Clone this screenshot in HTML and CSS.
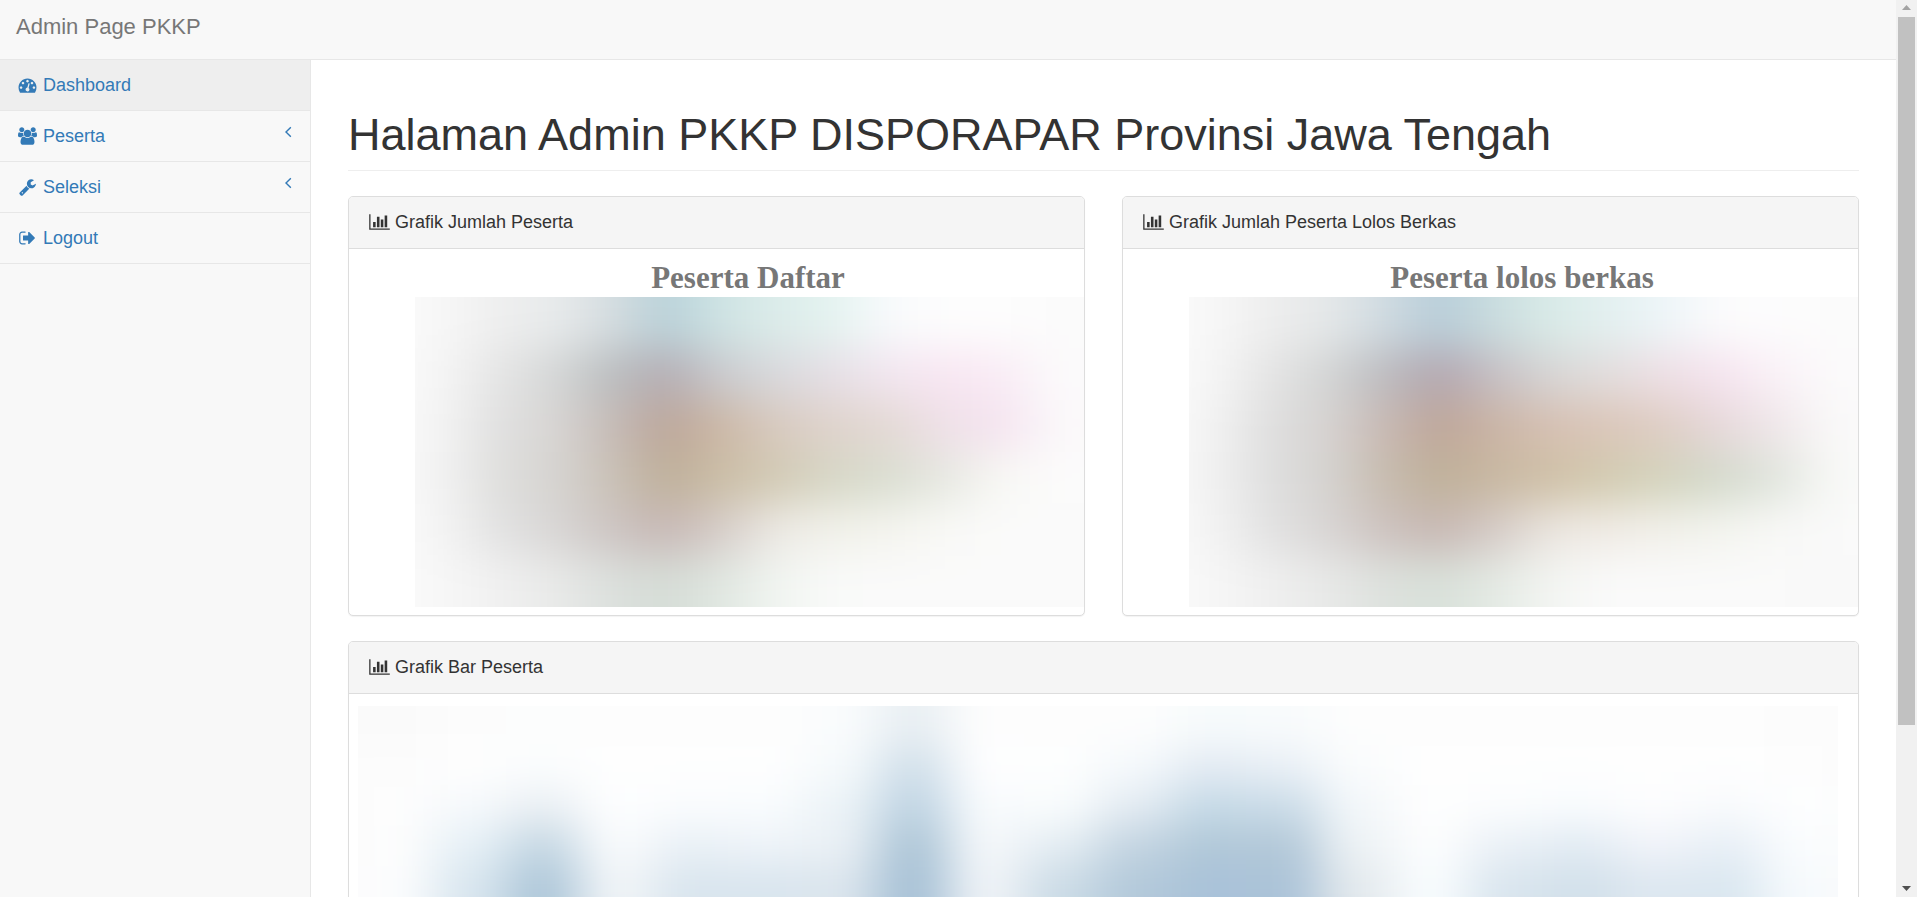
FILE: index.html
```html
<!DOCTYPE html>
<html lang="id">
<head>
<meta charset="utf-8">
<title>Admin Page PKKP</title>
<link rel="stylesheet" href="styles.css">
</head>
<body>
<div class="window">
  <div class="page">
    <header class="topbar"><a class="brand" href="#">Admin Page PKKP</a></header>
    <div class="columns">
      <nav class="sidebar" aria-label="Menu">
        <ul class="menu">
          <li><a class="menu-link active" href="#">
            <svg class="icon" viewBox="0 0 1792 1792" aria-hidden="true"><path d="M384 1152q0-53-37.5-90.5t-90.5-37.5-90.5 37.5-37.5 90.5 37.5 90.5 90.5 37.5 90.5-37.5 37.5-90.5zm192-448q0-53-37.5-90.5t-90.5-37.5-90.5 37.5-37.5 90.5 37.5 90.5 90.5 37.5 90.5-37.5 37.5-90.5zm428 481l101-382q6-26-7.5-48.5t-38.5-29.5-48 6.5-30 39.5l-101 382q-60 5-107 43.5t-63 98.5q-20 77 20 146t117 89 146-20 89-117q16-60-6-117t-72-91zm660-33q0-53-37.5-90.5t-90.5-37.5-90.5 37.5-37.5 90.5 37.5 90.5 90.5 37.5 90.5-37.5 37.5-90.5zm-640-640q0-53-37.5-90.5t-90.5-37.5-90.5 37.5-37.5 90.5 37.5 90.5 90.5 37.5 90.5-37.5 37.5-90.5zm448 192q0-53-37.5-90.5t-90.5-37.5-90.5 37.5-37.5 90.5 37.5 90.5 90.5 37.5 90.5-37.5 37.5-90.5zm320 448q0 261-141 483-19 29-54 29h-1402q-35 0-54-29-141-221-141-483 0-182 71-348t191-286 286-191 348-71 348 71 286 191 191 286 71 348z"/></svg>
            <span>Dashboard</span></a></li>
          <li><a class="menu-link" href="#">
            <svg class="icon" viewBox="0 0 1920 1792" aria-hidden="true"><path d="M593 896q-162 5-265 128h-134q-82 0-138-40.500t-56-118.500q0-353 124-353 6 0 43.500 21t97.500 42.500 119 21.500q67 0 133-23-5 37-5 66 0 139 81 256zm1071 637q0 120-73 189.500t-194 69.500h-874q-121 0-194-69.500t-73-189.500q0-53 3.500-103.500t14-109 26.500-108.500 43-97.500 62-81 85.500-53.500 111.500-20q10 0 43 21.500t73 48 107 48 135 21.500 135-21.500 107-48 73-48 43-21.500q61 0 111.500 20t85.500 53.500 62 81 43 97.500 26.500 108.500 14 109 3.500 103.500zm-1024-1277q0 106-75 181t-181 75-181-75-75-181 75-181 181-75 181 75 75 181zm704 384q0 159-112.500 271.500t-271.500 112.500-271.500-112.500-112.500-271.500 112.500-271.500 271.500-112.500 271.500 112.500 112.500 271.500zm576 225q0 78-56 118.500t-138 40.500h-134q-103-123-265-128 81-117 81-256 0-29-5-66 66 23 133 23 59 0 119-21.500t97.500-42.500 43.500-21q124 0 124 353zm-128-609q0 106-75 181t-181 75-181-75-75-181 75-181 181-75 181 75 75 181z"/></svg>
            <span>Peserta</span>
            <svg class="arrow" viewBox="512 416 768 1088" aria-hidden="true"><path d="M1203 544q0 13-10 23l-393 393 393 393q10 10 10 23t-10 23l-50 50q-10 10-23 10t-23-10l-466-466q-10-10-10-23t10-23l466-466q10-10 23-10t23 10l50 50q10 10 10 23z"/></svg></a></li>
          <li><a class="menu-link" href="#">
            <svg class="icon" viewBox="0 0 1792 1792" aria-hidden="true"><path d="M448 1472q0-26-19-45t-45-19-45 19-19 45 19 45 45 19 45-19 19-45zm644-420l-682 682q-37 37-90 37-52 0-91-37l-106-108q-38-36-38-90 0-53 38-91l681-681q39 98 114.500 173.500t173.500 114.500zm634-435q0 39-23 106-47 134-164.500 217.500t-258.500 83.500q-185 0-316.500-131.500t-131.500-316.500 131.500-316.500 316.500-131.500q58 0 121.500 16.500t107.500 46.500q16 11 16 28t-16 28l-293 169v224l193 107q5-3 79-48.500t135.500-81 70.500-35.500q15 0 23.500 10t8.500 25z"/></svg>
            <span>Seleksi</span>
            <svg class="arrow" viewBox="512 416 768 1088" aria-hidden="true"><path d="M1203 544q0 13-10 23l-393 393 393 393q10 10 10 23t-10 23l-50 50q-10 10-23 10t-23-10l-466-466q-10-10-10-23t10-23l466-466q10-10 23-10t23 10l50 50q10 10 10 23z"/></svg></a></li>
          <li><a class="menu-link" href="#">
            <svg class="icon" viewBox="0 0 1792 1792" aria-hidden="true"><path d="M704 1440q0 4 1 20t.5 26.500-3 23.500-10 19.500-20.500 6.500h-320q-119 0-203.500-84.500t-84.500-203.500v-704q0-119 84.500-203.500t203.500-84.500h320q13 0 22.500 9.500t9.500 22.500q0 4 1 20t.5 26.500-3 23.500-10 19.500-20.500 6.500h-320q-66 0-113 47t-47 113v704q0 66 47 113t113 47h312l11.500 1 11.500 3 8 5.500 7 9 2 13.500zm928-544q0 26-19 45l-544 544q-19 19-45 19t-45-19-19-45v-288h-448q-26 0-45-19t-19-45v-384q0-26 19-45t45-19h448v-288q0-26 19-45t45-19 45 19l544 544q19 19 19 45z"/></svg>
            <span>Logout</span></a></li>
        </ul>
      </nav>
      <main class="content">
        <h1 class="page-header">Halaman Admin PKKP DISPORAPAR Provinsi Jawa Tengah</h1>
        <div class="panels">
          <section class="panel">
            <h2 class="panel-heading"><svg class="chart-icon" viewBox="0 0 2048 1792" aria-hidden="true"><path d="M640 896v512h-256v-512h256zm384-512v1024h-256v-1024h256zm1024 1152v128h-2048v-1536h128v1408h1920zm-640-896v768h-256v-768h256zm384-384v1152h-256v-1152h256z"/></svg>Grafik Jumlah Peserta</h2>
            <div class="panel-body map">
              <h3 class="chart-title">Peserta Daftar</h3>
              <svg class="chart" id="daftar" role="img" aria-label="Peserta Daftar"></svg>
            </div>
          </section>
          <section class="panel">
            <h2 class="panel-heading"><svg class="chart-icon" viewBox="0 0 2048 1792" aria-hidden="true"><path d="M640 896v512h-256v-512h256zm384-512v1024h-256v-1024h256zm1024 1152v128h-2048v-1536h128v1408h1920zm-640-896v768h-256v-768h256zm384-384v1152h-256v-1152h256z"/></svg>Grafik Jumlah Peserta Lolos Berkas</h2>
            <div class="panel-body map">
              <h3 class="chart-title">Peserta lolos berkas</h3>
              <svg class="chart" id="lolos" role="img" aria-label="Peserta lolos berkas"></svg>
            </div>
          </section>
          <section class="panel wide">
            <h2 class="panel-heading"><svg class="chart-icon" viewBox="0 0 2048 1792" aria-hidden="true"><path d="M640 896v512h-256v-512h256zm384-512v1024h-256v-1024h256zm1024 1152v128h-2048v-1536h128v1408h1920zm-640-896v768h-256v-768h256zm384-384v1152h-256v-1152h256z"/></svg>Grafik Bar Peserta</h2>
            <div class="panel-body bars">
              <svg class="chart tall" id="bar" role="img" aria-label="Grafik Bar Peserta"></svg>
            </div>
          </section>
        </div>
      </main>
    </div>
  </div>
  <div class="scrollbar" aria-hidden="true">
    <svg class="scroll-arrow" viewBox="0 0 21 17"><path class="dim" d="M6 10h9l-4.500-5z"/></svg>
    <div class="track"><div class="thumb"></div></div>
    <svg class="scroll-arrow" viewBox="0 0 21 17"><path d="M6 6h9l-4.500 5z"/></svg>
  </div>
</div>
<script src="charts.js"></script>
</body>
</html>
```
FILE: styles.css
```css
* { box-sizing: border-box; }
body {
  margin: 0;
  font-family: "Liberation Sans", Arial, sans-serif;
  font-size: 18px;
  line-height: 25px;
  color: #333;
  background: #fff;
}
a { color: #337ab7; text-decoration: none; }
h1, h2, h3, ul { margin: 0; padding: 0; font-weight: normal; }

.window { display: flex; height: 100vh; }
.page {
  flex: 1;
  min-width: 0;
  display: flex;
  flex-direction: column;
  overflow: hidden;
  background: #f8f8f8;
}
.topbar {
  flex: none;
  padding: 14px 16px 20px;
  border-bottom: 1px solid #e7e7e7;
}
.brand { display: block; font-size: 22px; color: #777; }

.columns { flex: 1; display: flex; min-height: 0; }
.sidebar { flex: none; width: 310px; }
.menu { list-style: none; }
.menu li { border-bottom: 1px solid #e7e7e7; }
.menu-link {
  display: flex;
  align-items: center;
  gap: 6px;
  padding: 13px 18px 12px;
}
.menu-link.active { background: #eee; }
.icon { width: 19px; height: 18px; margin-bottom: 2px; fill: #337ab7; }
.arrow { align-self: flex-start; margin: 2px 0 0 auto; width: 8px; height: 12px; fill: #337ab7; }

.content {
  flex: 1;
  min-width: 0;
  padding: 50px 37px 0;
  border-left: 1px solid #e7e7e7;
  background: #fff;
  overflow: hidden;
}
.page-header {
  margin-bottom: 25px;
  padding-bottom: 10px;
  border-bottom: 1px solid #eee;
  font-size: 45px;
  line-height: 50px;
}
.panels { display: grid; grid-template-columns: 1fr 1fr; gap: 25px 37px; }
.wide { grid-column: 1 / -1; }
.panel {
  border: 1px solid #ddd;
  border-radius: 5px;
  background: #fff;
  box-shadow: 0 1px 1px rgba(0, 0, 0, .05);
  overflow: hidden;
}
.panel-heading {
  display: flex;
  align-items: center;
  gap: 5px;
  padding: 13px 20px;
  border-bottom: 1px solid #ddd;
  background: #f5f5f5;
  font-size: 18px;
}
.chart-icon { width: 21px; height: 18px; margin-bottom: 2px; fill: #333; }
.map { padding: 10px 0 8px 66px; }
.bars { padding: 12px 20px 12px 9px; }
.chart-title {
  padding: 0 3px 1px 0;
  font-family: "Liberation Serif", "Times New Roman", serif;
  font-size: 31px;
  font-weight: bold;
  line-height: 37px;
  text-align: center;
  color: #777;
}
.chart { display: block; width: 100%; height: 310px; overflow: hidden; }
.chart.tall { height: 400px; }

.scrollbar {
  flex: none;
  width: 21px;
  display: flex;
  flex-direction: column;
  background: #f1f1f1;
}
.scroll-arrow { flex: none; width: 21px; height: 17px; fill: #505050; }
.scroll-arrow .dim { fill: #a3a3a3; }
.track { flex: 1; padding: 0 2px; }
.thumb { height: 82%; background: #c1c1c1; }
```
FILE: charts.js
```js
// Each chart is a grid of colour samples, softened into a continuous field.
const fields = {
  daftar: { w: 669, h: 310, blur: "26 21", rows: [
    "f7f7f7 eeeeee e8ebec d6dde0 b8d1d9 cfe4e4 dcecea e4f3f0 f8fafc fdfdfd fdfdfd fbfbfb",
    "f5f5f5 e5e5e5 d5d7d7 babec0 b4acb3 cacbcf d9d9dd e6dfe6 f2e6f0 f8e6f2 f9ebf5 fbfafb",
    "f3f3f3 e0e0e0 d8d6d4 c6bcb8 bca599 ccb8a6 d8cac0 dfd3cc e3d9d4 efe0e8 f4e3ef fbf7fa",
    "f2f2f2 dededc d6d4d1 cac2b8 beaf99 cbbea6 d2cab4 d6d7c6 d9ddd0 e6e8e1 f8f8f4 fbfbfb",
    "f4f4f4 e2e2e2 d8d6d5 cdc5c3 c7b7b5 d6cdc9 edeae5 f1f1ea f4f4ee f9f9f6 fafafa fafafa",
    "f7f7f7 f0f0f0 e9eae9 dce0dd d5dcd6 e0e7e1 f1f5f1 f9faf9 fafafa fafafa fafafa fafafa"
  ]},
  lolos: { w: 669, h: 310, blur: "26 21", rows: [
    "f7f7f7 ededed e5e8e9 d0dbe1 b7cdd9 cadddf d9ebe8 e3f0f0 edf5f8 fbfbfc fdfdfd fbfbfb",
    "f5f5f5 e4e4e4 d3d5d5 bcbcc0 b2a5af c6c0c5 d8d6d6 e2dddd eedfe5 f5e3ef faf1f7 fbfafb",
    "f1f1f1 dedede d6d3d1 c8b9b4 bea598 cbb5a6 d6c0b3 dbc6b9 decdc4 e6d8da efe6e9 f9f8f8",
    "f0f0f0 dedede d5d3d0 c7bcaf bfb098 c8b8a2 cfc0a6 d2cbb0 d3d3bc d3d9cb dfe4dc f7f8f5",
    "f2f2f2 e1e1e1 d8d5d4 cdc2bf c7b7b3 d5cbc7 ebe6e0 f0ebe5 f1f0ea f3f4ee f8f8f6 f9f9f9",
    "f6f6f6 efefef e8e9e8 dde1dd d8e0d9 e4eae4 f3f5f2 fafafa fafafa fafafa fafafa f8f8f8"
  ]},
  bar: { w: 1480, h: 400, blur: "24 18", rowHeight: 40, rows: [
    "fafafa fcfcfc fcfdfd fdfdfd fdfdfd fdfdfd fafcfd e9eff3 fdfdfd fdfdfd fdfdfd f7fbfc f8fbfc fdfdfd fdfdfd fdfdfd fdfdfd fdfdfd fdfdfd fcfcfc",
    "fcfcfc fefefe fbfdfe fefefe fefefe fefefe f6fafc d3e1eb fefeff fdfefe f5f9fc e4ebf3 eaf0f6 fafcfd fefefe fefefe fefefe fefefe fefefe fdfdfd",
    "fdfdfd f6f9fc ebf0f4 fdfeff fafcfe f9fcfe ecf3f7 c1d5e4 f8fbfd f9fcfd e3ebf2 c6dae7 cbdce8 f3f7fa fefefe fbfdfe f9fcfe fdfdfe f9fbfd fdfeff",
    "fdfdfd e6f0f6 c6d8e4 f8fafc e9f0f6 eef3f8 eaf0f5 aec6d7 f4f7fa e3ecf2 c3d4e1 b1c8d8 b3c8d8 edf2f5 fcfdfe eaf0f6 e2ebf3 f0f3f9 e8eff6 fafcfe",
    "fcfdfe d9e6ef aec7d9 f0f4f7 d9e5ee d9e5ee dbe5ed a7c1d6 eff3f7 cbdbe6 b3c9da a9c2d9 abc3d8 e3e9ed f8fcfe d9e5ee d2e0ea dde7f0 dae7f0 f6fafd"
  ]}
};

for (const [id, field] of Object.entries(fields)) {
  const grid = field.rows.map(row => row.split(" "));
  const cols = grid[0].length;
  const cw = field.w / cols;
  const ch = field.rowHeight || field.h / grid.length;
  const count = Math.round(field.h / ch);
  const clamp = (n, max) => Math.min(Math.max(n, 0), max);
  let cells = "";
  for (let r = -2; r < count + 2; r++) {
    for (let c = -2; c < cols + 2; c++) {
      const inside = c >= 0 && c < cols;
      const colour = inside ? grid[clamp(r, grid.length - 1)][c] : "fbfbfb";
      cells += `<rect x="${c * cw}" y="${r * ch}" width="${cw + 1}" height="${ch + 1}" fill="#${colour}"/>`;
    }
  }
  const svg = document.getElementById(id);
  svg.setAttribute("viewBox", `0 0 ${field.w} ${field.h}`);
  svg.setAttribute("preserveAspectRatio", "none");
  svg.innerHTML = `<filter id="soft-${id}" filterUnits="userSpaceOnUse" x="-60" y="-60" width="${field.w + 120}" height="${field.h + 120}" color-interpolation-filters="sRGB"><feGaussianBlur stdDeviation="${field.blur}"/></filter><g filter="url(#soft-${id})">${cells}</g>`;
}
```
